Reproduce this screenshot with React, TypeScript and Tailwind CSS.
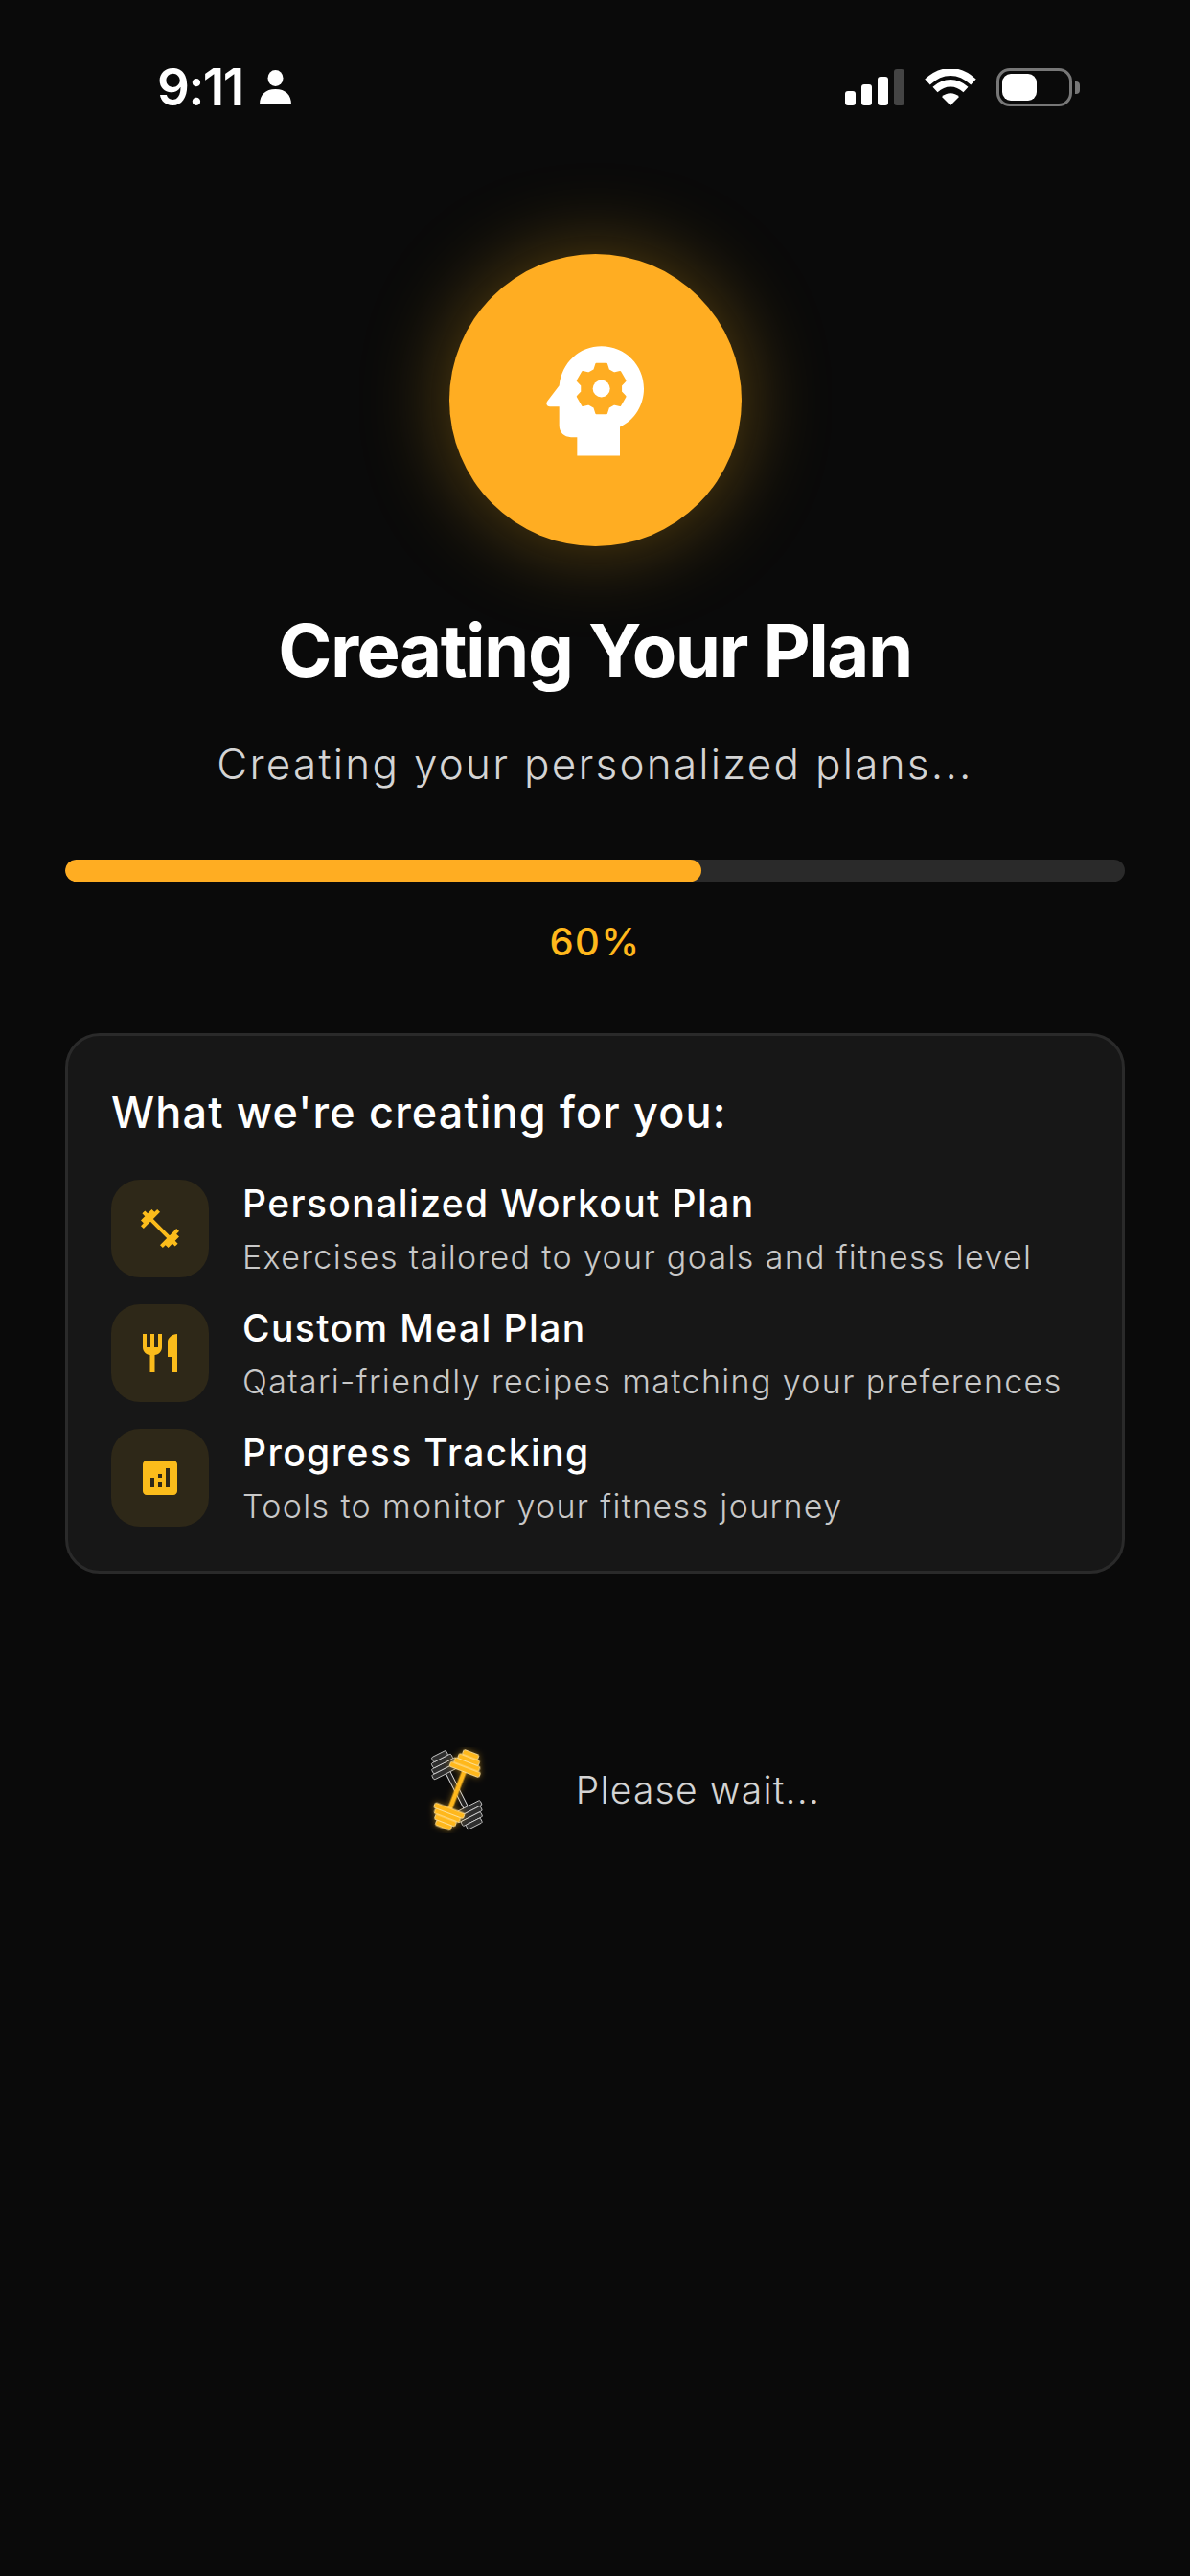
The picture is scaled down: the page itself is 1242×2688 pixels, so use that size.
import { MdAnalytics, MdFitnessCenter, MdRestaurant } from "react-icons/md"

const FEATURES = [
  { icon: MdFitnessCenter, title: "Personalized Workout Plan", desc: "Exercises tailored to your goals and fitness level" },
  { icon: MdRestaurant, title: "Custom Meal Plan", desc: "Qatari-friendly recipes matching your preferences" },
  { icon: MdAnalytics, title: "Progress Tracking", desc: "Tools to monitor your fitness journey" },
]

// six toothed gear around 622,555 in the head icon's box
const gearPoints = () => {
  const pts: string[] = []
  for (let i = 0; i < 6; i++) {
    const a = (Math.PI / 3) * i - Math.PI / 2
    const ux = Math.cos(a)
    const uy = Math.sin(a)
    const corner = (r: number, w: number) => `${622 + ux * r - uy * w},${555 + uy * r + ux * w}`
    pts.push(corner(58, -22), corner(77, -16), corner(77, 16), corner(58, 22))
  }
  return pts.join(" ")
}

function HeadGear() {
  return (
    <svg viewBox="437 410 330 365" className="w-[110px] h-[122px]" aria-hidden>
      <path
        fill="#fff"
        d="M546 765H680V675C728 652 755 606 755 555C755 481 696 422 622 422C554 422 498 472 490 545L453 594C447 602 451 611 461 611H490V670C490 692 505 707 527 707H546Z"
      />
      <polygon points={gearPoints()} fill="#FFAD22" stroke="#FFAD22" strokeWidth="6" strokeLinejoin="round" />
      <circle cx="622" cy="555" r="27" fill="#fff" />
    </svg>
  )
}

function Dumbbell({ gold }: { gold?: boolean }) {
  const fill = gold ? "#FFB81C" : "#2e2e2e"
  const line = gold ? "#FFE7A8" : "#D8D8D8"
  const plates = [
    { y: 20, w: 33 },
    { y: 14.5, w: 28 },
    { y: 9, w: 23 },
    { y: 3.5, w: 17 },
  ]
  return (
    <>
      {gold ? (
        <rect x="-2.5" y="20" width="5" height="50" fill={fill} />
      ) : (
        <rect x="-2.5" y="20" width="5" height="50" fill="#222" stroke={line} strokeWidth="1" />
      )}
      {plates.map((p) => (
        <g key={p.y}>
          <rect x={-p.w / 2} y={p.y} width={p.w} height="5.5" rx="1.5" fill={fill} stroke={line} strokeWidth="0.8" />
          <rect x={-p.w / 2} y={86 - p.y} width={p.w} height="5.5" rx="1.5" fill={fill} stroke={line} strokeWidth="0.8" />
        </g>
      ))}
    </>
  )
}

function Dumbbells() {
  return (
    <svg viewBox="0 0 176 90" className="w-[176px] h-[90px] shrink-0" aria-hidden>
      <g transform="translate(91 45) rotate(-27) translate(0 -46)">
        <Dumbbell />
      </g>
      <g transform="translate(91 45) rotate(21) translate(0 -46)" style={{ filter: "drop-shadow(0 0 3px rgba(255,184,28,.5))" }}>
        <Dumbbell gold />
      </g>
    </svg>
  )
}

function StatusBar() {
  return (
    <div className="flex items-center justify-between h-[38px] mt-[72px] pl-[164px] pr-[115px]">
      <div className="flex items-center gap-[17px]">
        <span className="text-[53px] leading-[38px] font-semibold tracking-[-1.5px] text-white">9:11</span>
        <svg viewBox="0 0 33 36" className="w-[33px] h-[36px]" aria-hidden>
          <ellipse cx="16.5" cy="8.5" rx="8" ry="8.5" fill="#fff" />
          <path fill="#fff" d="M0 36C0 26 6 20 16.5 20S33 26 33 36Z" />
        </svg>
      </div>
      <div className="flex items-center gap-[21px]">
        <div className="flex items-end gap-[6px] h-[38px]">
          <div className="w-[11px] h-[15px] rounded-[3px] bg-white" />
          <div className="w-[11px] h-[22px] rounded-[3px] bg-white" />
          <div className="w-[11px] h-[30px] rounded-[3px] bg-white" />
          <div className="w-[11px] h-[38px] rounded-[3px] bg-[#444]" />
        </div>
        <svg viewBox="0 0 54 38" className="w-[54px] h-[38px]" aria-hidden>
          <path d="M3 13.5C18 -0.5 36 -0.5 51 13.5" fill="none" stroke="#fff" strokeWidth="8" />
          <path d="M11 21.5C21 12.5 33 12.5 43 21.5" fill="none" stroke="#fff" strokeWidth="7.5" />
          <path d="M27 38L18 29C23 24 31 24 36 29Z" fill="#fff" />
        </svg>
        <div className="flex items-center gap-[3px]">
          <div className="w-[79px] h-[40px] rounded-[14px] border-[3px] border-[#777] p-[3px]">
            <div className="w-[36px] h-full rounded-[9px] bg-white" />
          </div>
          <div className="w-[5px] h-[13px] rounded-r-[4px] bg-[#777]" />
        </div>
      </div>
    </div>
  )
}

export default function App() {
  return (
    <div className="w-[1242px] h-[2688px] bg-[#0a0a0a] flex flex-col font-['Inter',sans-serif] overflow-hidden">
      <StatusBar />

      {/* Hero */}
      <div className="flex flex-col items-center mt-[155px]">
        <div className="w-[305px] h-[305px] rounded-full bg-[#FFAD22] shadow-[0_0_90px_rgba(255,184,28,0.35)] flex items-center justify-center">
          <HeadGear />
        </div>
        <h1 className="mt-[65px] text-[76px] leading-[86px] font-bold tracking-[-1.5px] text-white">Creating Your Plan</h1>
        <p className="mt-[51px] text-[44px] leading-[50px] tracking-[2.25px] font-light text-[#d4d4d4]">Creating your personalized plans...</p>
      </div>

      {/* Progress */}
      <div className="mx-[68px] mt-[75px]">
        <div className="h-[23px] rounded-full bg-[#2a2a2a] overflow-hidden">
          <div className="w-[60%] h-full rounded-full bg-[#FFAD22]" />
        </div>
        <p className="mt-[40px] text-center text-[40px] leading-[46px] tracking-[1.5px] font-medium text-[#FFB81C]">60%</p>
      </div>

      {/* What we're creating */}
      <div className="mx-[68px] mt-[72px] h-[564px] rounded-[36px] border-[3px] border-[#2a2a2a] bg-[#171717] px-[45px] pt-[53px]">
        <h2 className="text-[45px] leading-[54px] font-medium tracking-[1.15px] text-white">What we're creating for you:</h2>
        <div className="mt-[43px] flex flex-col gap-[28px]">
          {FEATURES.map((f) => (
            <div key={f.title} className="flex items-center gap-[35px]">
              <div className="w-[102px] h-[102px] shrink-0 rounded-[30px] bg-[#2E2818] flex items-center justify-center">
                <f.icon className="w-[48px] h-[48px] text-[#FBBC1B]" />
              </div>
              <div className="whitespace-nowrap">
                <p className="text-[39px] leading-[48px] font-medium tracking-[1.4px] text-white">{f.title}</p>
                <p className="mt-[11px] text-[34px] leading-[42px] tracking-[1.35px] font-light text-[#c8c8c8]">{f.desc}</p>
              </div>
            </div>
          ))}
        </div>
      </div>

      {/* Footer */}
      <div className="flex items-center justify-center gap-[39px] mt-[181px]">
        <Dumbbells />
        <p className="text-[39px] leading-[46px] tracking-[1.2px] font-light text-[#d4d4d4]">Please wait...</p>
      </div>
    </div>
  )
}
